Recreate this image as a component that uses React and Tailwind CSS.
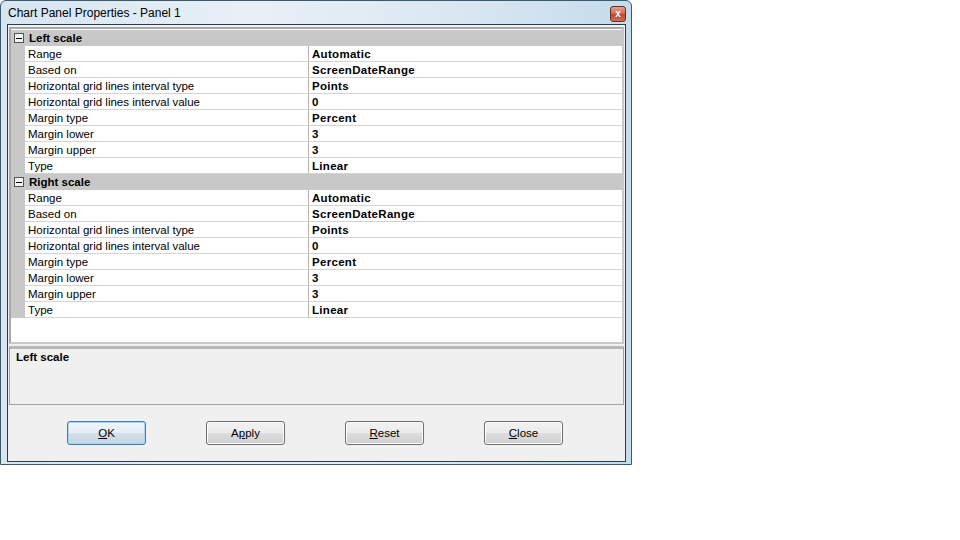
import React from "react";

const leftRows = [
  ["Range", "Automatic"],
  ["Based on", "ScreenDateRange"],
  ["Horizontal grid lines interval type", "Points"],
  ["Horizontal grid lines interval value", "0"],
  ["Margin type", "Percent"],
  ["Margin lower", "3"],
  ["Margin upper", "3"],
  ["Type", "Linear"],
];

function Category({ title }) {
  return (
    <div className="flex h-[16px] bg-[#c8c8c8] items-center">
      <div className="w-[14px] h-full flex items-center justify-center pl-[1px]">
        <div className="w-[10px] h-[10px] border border-[#555] bg-[#f4f4f4] flex items-center justify-center">
          <div className="w-[6px] h-[1px] bg-black" />
        </div>
      </div>
      <div className="pl-[4px] pt-[2px] font-bold text-[11.5px] leading-none text-black">{title}</div>
    </div>
  );
}

function Row({ name, value }) {
  return (
    <div className="flex h-[16px]">
      <div className="w-[14px] h-full bg-[#c8c8c8]" />
      <div className="flex-1 flex border-b border-[#d4d4d4] bg-white">
        <div className="w-[284px] pl-[3px] pt-[2px] flex items-center text-[11.5px] leading-none text-black border-r border-[#b4b4b4]">
          {name}
        </div>
        <div className="flex-1 pl-[3px] pt-[2px] flex items-center text-[11.5px] leading-none font-bold text-black tracking-[0.3px]">
          {value}
        </div>
      </div>
    </div>
  );
}

function Btn({ children, def }) {
  return (
    <div
      className={
        "w-[79px] h-[24px] pt-[1px] rounded-[3px] border flex items-center justify-center text-[11.5px] text-black " +
        (def
          ? "border-[#3c7fb1] bg-[linear-gradient(#f0f6fa_0%,#e6eef4_50%,#d3dee8_51%,#c9d6e2_100%)] shadow-[inset_0_0_0_1px_#a8d8f0]"
          : "border-[#707070] bg-[linear-gradient(#f2f2f2_0%,#ebebeb_50%,#dddddd_51%,#cfcfcf_100%)] shadow-[inset_0_0_0_1px_#fcfcfc]")
      }
    >
      {children}
    </div>
  );
}

export default function App() {
  return (
    <div
      className="w-[960px] h-[540px] bg-white"
      style={{ fontFamily: '"Liberation Sans", Arial, sans-serif' }}
    >
      <div className="w-[632px] h-[465px] border border-[#3b5a6b] rounded-t-[6px] bg-[linear-gradient(90deg,#d6e5f1_0%,#e8f0f7_40%,#dbe8f2_70%,#c4dcec_100%)] flex flex-col pl-[6px] pr-[5px] pb-[2px]">
        <div className="h-[23px] flex items-center justify-between">
          <div className="text-[12px] text-black pl-[1px] pt-[1px]">Chart Panel Properties - Panel 1</div>
          <div className="w-[16px] h-[16px] mt-[2px] rounded-[3px] border border-[#6b2d22] bg-[linear-gradient(#e5a08e_0%,#d46d55_45%,#c0452b_55%,#d0705a_100%)] flex items-center justify-center">
            <span className="text-white font-bold text-[10px] leading-none">x</span>
          </div>
        </div>
        <div className="flex-1 border border-[#2b3b47] bg-[#f0f0f0] flex flex-col">
          <div className="mt-[2px] mx-[1px] h-[317px] border-2 border-[#a8a8a8] border-r-[#c8c8c8] border-b-[#c8c8c8] bg-white flex flex-col pt-[1px]">
            <Category title="Left scale" />
            {leftRows.map(([n, v]) => (
              <Row key={"l" + n} name={n} value={v} />
            ))}
            <Category title="Right scale" />
            {leftRows.map(([n, v]) => (
              <Row key={"r" + n} name={n} value={v} />
            ))}
          </div>
          <div className="mt-[2px] mx-[1px] h-[59px] border border-[#a0a0a0] border-t-[3px] border-t-[#b8b8b8] bg-[#f0f0f0] pl-[6px] pt-0">
            <div className="font-bold text-[11.5px] text-black">Left scale</div>
          </div>
          <div className="flex pl-[59px] pt-[16px] gap-[60px]">
            <Btn def>
              <span className="underline">O</span>K
            </Btn>
            <Btn>
              A<span className="underline">p</span>ply
            </Btn>
            <Btn>
              <span className="underline">R</span>eset
            </Btn>
            <Btn>
              <span className="underline">C</span>lose
            </Btn>
          </div>
        </div>
      </div>
    </div>
  );
}
